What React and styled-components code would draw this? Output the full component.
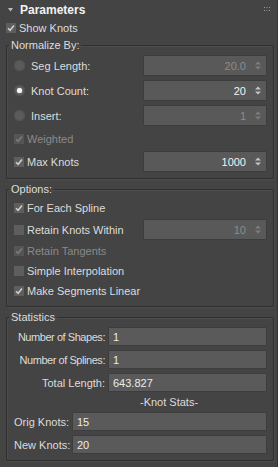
import React from 'react';
import styled, { createGlobalStyle } from 'styled-components';

const GlobalStyle = createGlobalStyle`
  html, body { margin:0; padding:0; background:#444444; }
  body {
    font-family:"Liberation Sans", Arial, sans-serif;
    font-size:11px;
    color:#dcdcdc;
  }
`;

const Panel = styled.div`
  width:278px;
  height:467px;
  box-sizing:border-box;
  background:#444444;
  padding:0 3px 0 6px;
  border-right:1px solid #363636;
  display:flex;
  flex-direction:column;
`;

const Header = styled.div`
  height:19px;
  display:flex;
  align-items:center;
  padding:0 4px 0 2px;
`;

const Title = styled.span`
  font-size:12px;
  font-weight:700;
  color:#f2f2f2;
  margin-left:7px;
  flex:1;
`;

const Line = styled.div`
  display:flex;
  align-items:center;
  gap:3px;
  height:${p => p.$h || 18}px;
  margin-top:${p => p.$mt || 0}px;
  color:${p => (p.$off ? '#8a8a8a' : '#dcdcdc')};
  white-space:nowrap;
`;

const Group = styled.fieldset`
  margin:${p => p.$mt}px 0 0;
  padding:3px 0 6px;
  border:1px solid #2f2f2f;
  border-radius:2px;
  box-shadow:inset 1px 1px 0 #4c4c4c, 1px 1px 0 #4c4c4c;
  min-width:0;
`;

const Legend = styled.legend`
  margin-left:2px;
  padding:0 2px;
  line-height:13px;
  color:#dcdcdc;
`;

const Rows = styled.div`
  display:flex;
  flex-direction:column;
  gap:${p => p.$gap || 4}px;
  padding:0 6px 0 7px;
`;

const FieldRow = styled.div`
  display:grid;
  grid-template-columns:1fr 124px;
  align-items:center;
  height:${p => p.$h || 21}px;
`;

const RadioLabel = styled.label`
  display:flex;
  align-items:center;
  gap:6px;
  color:${p => (p.$off ? '#8a8a8a' : '#dcdcdc')};
  white-space:nowrap;
`;

const Circle = styled.span`
  width:11px;
  height:11px;
  border-radius:50%;
  background:#5b5b5b;
  box-shadow:inset 0 0 0 1px #525252;
  display:flex;
  align-items:center;
  justify-content:center;
  &::after {
    content:'';
    width:5px;
    height:5px;
    border-radius:50%;
    background:${p => (p.$on ? '#f4f4f4' : 'transparent')};
    box-shadow:${p => (p.$on ? '0 0 1px #fff' : 'none')};
  }
`;

const Box = styled.span`
  width:10px;
  height:10px;
  flex:none;
  background:${p => (p.$off ? '#555555' : '#5e5e5e')};
  display:flex;
  align-items:center;
  justify-content:center;
`;

const Spin = styled.div`
  height:100%;
  box-sizing:border-box;
  background:#595959;
  border:1px solid #3d3d3d;
  border-radius:1px;
  display:flex;
  align-items:center;
  justify-content:flex-end;
  padding-right:5px;
  gap:9px;
  color:${p => (p.$off ? '#8c8c8c' : '#f4f4f4')};
`;

const StatRow = styled.div`
  display:grid;
  grid-template-columns:${p => p.$col}px 1fr;
  column-gap:${p => p.$gap}px;
  align-items:center;
  height:19px;
`;

const StatLabel = styled.span`
  text-align:right;
  white-space:nowrap;
  letter-spacing:${p => (p.$tight ? '-0.45px' : '0')};
`;

const StatField = styled.div`
  height:19px;
  box-sizing:border-box;
  background:#5a5a5a;
  border:1px solid #3d3d3d;
  border-radius:1px;
  padding-left:4px;
  display:flex;
  align-items:center;
  color:#ececec;
`;

const SubTitle = styled.div`
  height:12px;
  line-height:12px;
  padding-left:126px;
  color:#dcdcdc;
`;

const Check = ({ on = true, off }) => (
  <Box $off={off}>
    {on && (
      <svg width="8" height="8" viewBox="0 0 8 8">
        <path d="M1 4.2 L3.1 6.3 L7 1.6" fill="none" stroke={off ? '#7c7c7c' : '#cfcfcf'} strokeWidth="1.6" />
      </svg>
    )}
  </Box>
);

const Arrows = ({ off }) => (
  <svg width="6" height="9" viewBox="0 0 6 9">
    <g fill={off ? '#7e7e7e' : '#c4c4c4'}>
      <polygon points="0,3.6 3,0.4 6,3.6" />
      <polygon points="0,5.4 3,8.6 6,5.4" />
    </g>
  </svg>
);

const Spinner = ({ value, off }) => (
  <Spin $off={off}>
    <span>{value}</span>
    <Arrows off={off} />
  </Spin>
);

const App = () => (
  <>
    <GlobalStyle />
    <Panel>
      <Header>
        <svg width="5" height="4" viewBox="0 0 5 4">
          <polygon points="0,0 5,0 2.5,3.5" fill="#bcbcbc" />
        </svg>
        <Title>Parameters</Title>
        <svg width="6" height="5" viewBox="0 0 6 5">
          <g fill="#9a9a9a">
            <rect x="0" y="0" width="1" height="1" />
            <rect x="2.5" y="0" width="1" height="1" />
            <rect x="5" y="0" width="1" height="1" />
            <rect x="0" y="3" width="1" height="1" />
            <rect x="2.5" y="3" width="1" height="1" />
            <rect x="5" y="3" width="1" height="1" />
          </g>
        </svg>
      </Header>

      <Line $h={16} $mt={1}>
        <Check />
        <span>Show Knots</span>
      </Line>

      <Group $mt={3}>
        <Legend>Normalize By:</Legend>
        <Rows>
          <FieldRow>
            <RadioLabel><Circle />Seg Length:</RadioLabel>
            <Spinner value="20.0" off />
          </FieldRow>
          <FieldRow>
            <RadioLabel><Circle $on />Knot Count:</RadioLabel>
            <Spinner value="20" />
          </FieldRow>
          <FieldRow>
            <RadioLabel><Circle />Insert:</RadioLabel>
            <Spinner value="1" off />
          </FieldRow>
          <Line $h={17} $off>
            <Check off />
            <span>Weighted</span>
          </Line>
          <FieldRow>
            <Line $h={21}>
              <Check />
              <span>Max Knots</span>
            </Line>
            <Spinner value="1000" />
          </FieldRow>
        </Rows>
      </Group>

      <Group $mt={4}>
        <Legend>Options:</Legend>
        <Rows $gap={2}>
          <Line $h={18}>
            <Check />
            <span>For Each Spline</span>
          </Line>
          <FieldRow>
            <Line $h={21}>
              <Check on={false} />
              <span>Retain Knots Within</span>
            </Line>
            <Spinner value="10" off />
          </FieldRow>
          <Line $h={18} $off>
            <Check off />
            <span>Retain Tangents</span>
          </Line>
          <Line $h={18}>
            <Check on={false} />
            <span>Simple Interpolation</span>
          </Line>
          <Line $h={18}>
            <Check />
            <span>Make Segments Linear</span>
          </Line>
        </Rows>
      </Group>

      <Group $mt={4}>
        <Legend>Statistics</Legend>
        <Rows>
          <StatRow $col={91} $gap={3}>
            <StatLabel $tight>Number of Shapes:</StatLabel>
            <StatField>1</StatField>
          </StatRow>
          <StatRow $col={91} $gap={3}>
            <StatLabel $tight>Number of Splines:</StatLabel>
            <StatField>1</StatField>
          </StatRow>
          <StatRow $col={91} $gap={3}>
            <StatLabel>Total Length:</StatLabel>
            <StatField>643.827</StatField>
          </StatRow>
          <SubTitle>-Knot Stats-</SubTitle>
          <StatRow $col={53} $gap={5}>
            <StatLabel>Orig Knots:</StatLabel>
            <StatField>15</StatField>
          </StatRow>
          <StatRow $col={53} $gap={5}>
            <StatLabel>New Knots:</StatLabel>
            <StatField>20</StatField>
          </StatRow>
        </Rows>
      </Group>
    </Panel>
  </>
);

export default App;
